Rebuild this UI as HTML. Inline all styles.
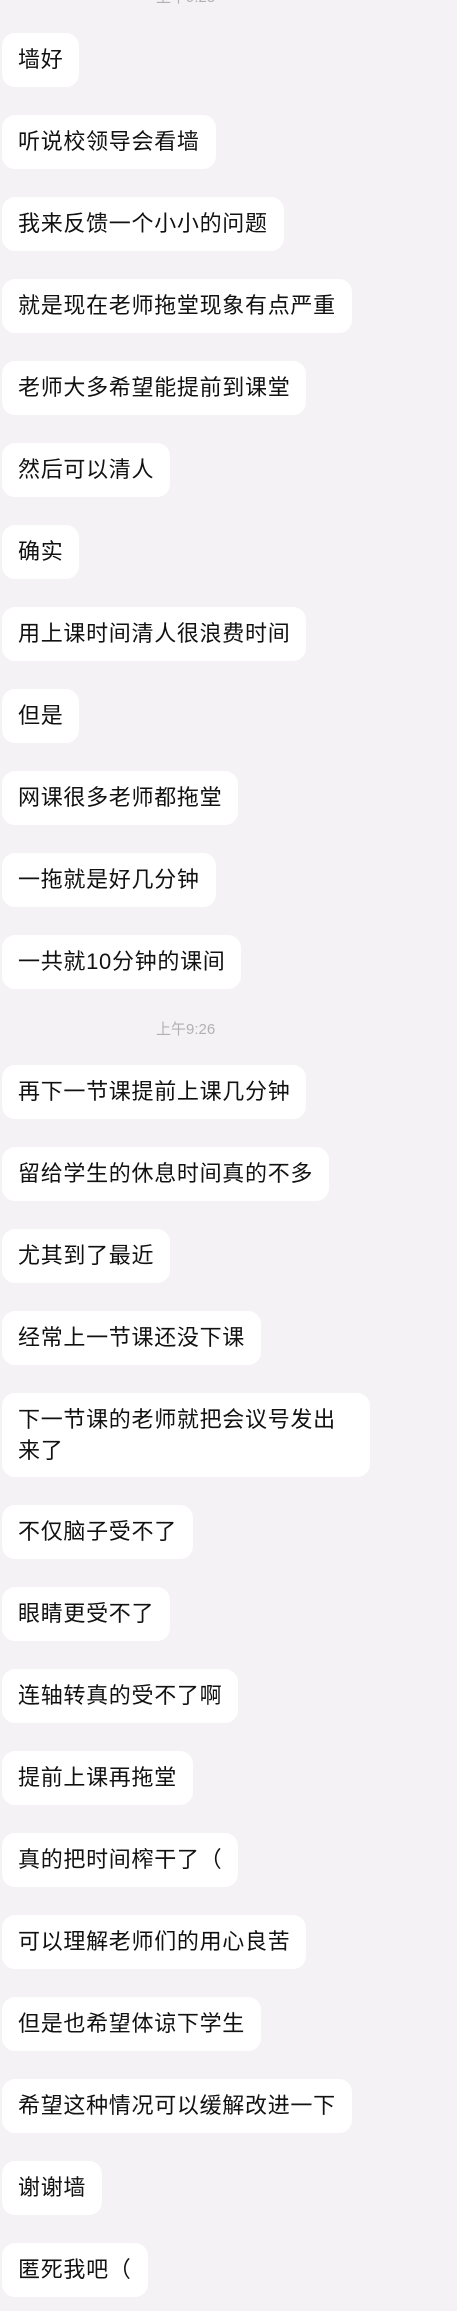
<!DOCTYPE html>
<html><head><meta charset="utf-8"><style>
html,body{margin:0;padding:0}
body{width:457px;height:2311px;background:#f5f2f5;position:relative;overflow:hidden;font-family:"Liberation Sans","Noto Sans CJK SC",sans-serif}
.b{position:absolute;left:2px;background:#fff;border-radius:13px;height:54px;line-height:54px;padding:0 16px 0 16px;font-size:22px;letter-spacing:0.7px;color:#111;white-space:nowrap}
.b2{height:84px;line-height:31px;padding:11px 16px 0 16px;box-sizing:border-box;width:368px;white-space:normal}
.t{position:absolute;left:156px;font-size:15px;color:#b3b0b3}
</style></head><body>
<div class="t" style="top:-14px">上午9:25</div>
<div class="b" style="top:33px">墙好</div>
<div class="b" style="top:115px">听说校领导会看墙</div>
<div class="b" style="top:197px">我来反馈一个小小的问题</div>
<div class="b" style="top:279px">就是现在老师拖堂现象有点严重</div>
<div class="b" style="top:361px">老师大多希望能提前到课堂</div>
<div class="b" style="top:443px">然后可以清人</div>
<div class="b" style="top:525px">确实</div>
<div class="b" style="top:607px">用上课时间清人很浪费时间</div>
<div class="b" style="top:689px">但是</div>
<div class="b" style="top:771px">网课很多老师都拖堂</div>
<div class="b" style="top:853px">一拖就是好几分钟</div>
<div class="b" style="top:935px">一共就10分钟的课间</div>
<div class="t" style="top:1018px">上午9:26</div>
<div class="b" style="top:1065px">再下一节课提前上课几分钟</div>
<div class="b" style="top:1147px">留给学生的休息时间真的不多</div>
<div class="b" style="top:1229px">尤其到了最近</div>
<div class="b" style="top:1311px">经常上一节课还没下课</div>
<div class="b b2" style="top:1393px">下一节课的老师就把会议号发出来了</div>
<div class="b" style="top:1505px">不仅脑子受不了</div>
<div class="b" style="top:1587px">眼睛更受不了</div>
<div class="b" style="top:1669px">连轴转真的受不了啊</div>
<div class="b" style="top:1751px">提前上课再拖堂</div>
<div class="b" style="top:1833px">真的把时间榨干了（</div>
<div class="b" style="top:1915px">可以理解老师们的用心良苦</div>
<div class="b" style="top:1997px">但是也希望体谅下学生</div>
<div class="b" style="top:2079px">希望这种情况可以缓解改进一下</div>
<div class="b" style="top:2161px">谢谢墙</div>
<div class="b" style="top:2243px">匿死我吧（</div>
</body></html>
